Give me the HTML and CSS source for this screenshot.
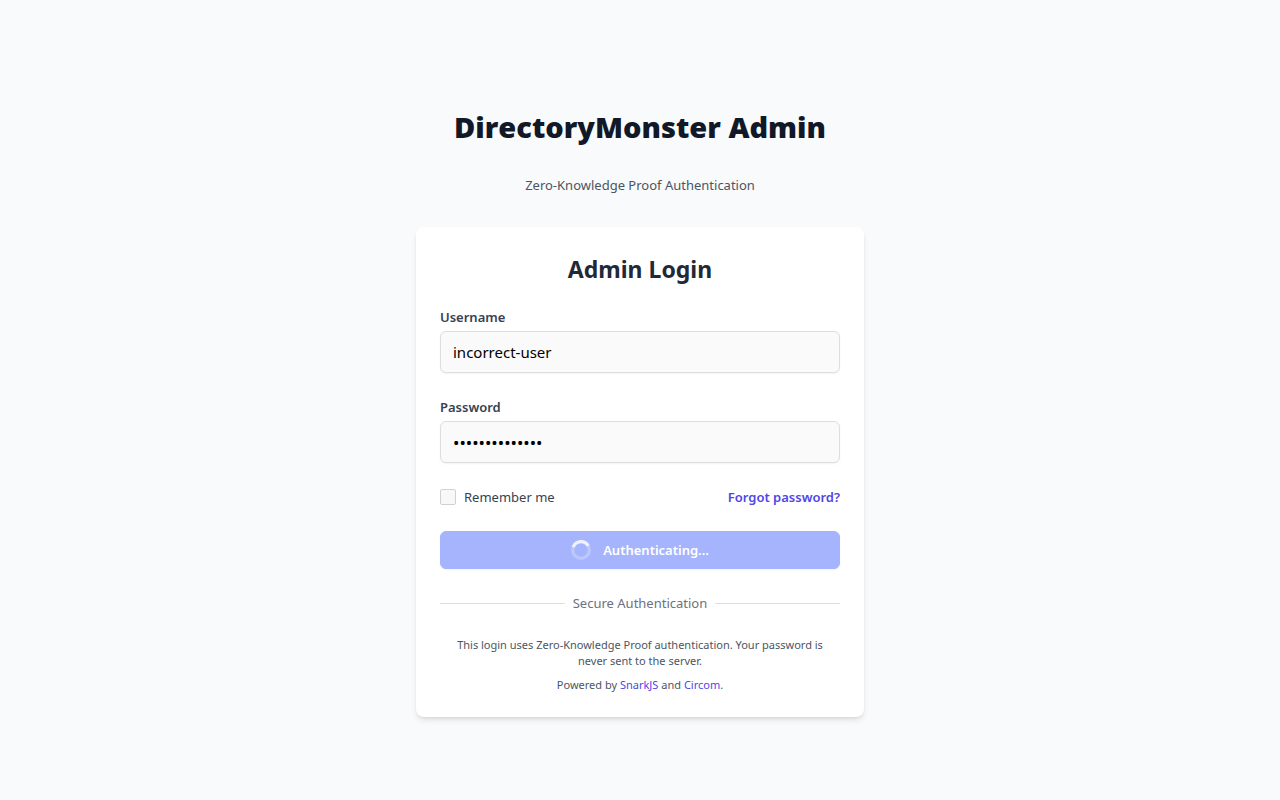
FILE: index.html
```html
<!DOCTYPE html>
<html lang="en">
<head>
<meta charset="utf-8">
<meta name="viewport" content="width=device-width, initial-scale=1">
<title>DirectoryMonster Admin</title>
<link rel="stylesheet" href="styles.css">
</head>
<body>
<main class="page">
  <header class="intro">
    <h1 class="brand">DirectoryMonster Admin</h1>
    <p class="tagline">Zero-Knowledge Proof Authentication</p>
  </header>
  <section class="card">
    <h2 class="card-title">Admin Login</h2>
    <form class="form">
      <div class="field">
        <label class="label" for="username">Username</label>
        <input class="input" id="username" type="text" value="incorrect-user" disabled>
      </div>
      <div class="field">
        <label class="label" for="password">Password</label>
        <input class="input password" id="password" type="password" value="wrong-password" disabled>
      </div>
      <div class="options">
        <div class="remember">
          <input class="checkbox" id="remember" type="checkbox" disabled>
          <label for="remember">Remember me</label>
        </div>
        <a class="forgot" href="#">Forgot password?</a>
      </div>
      <button class="submit" type="submit" disabled>
        <svg class="spinner" viewBox="0 0 24 24" fill="none" aria-hidden="true">
          <circle cx="12" cy="12" r="10" stroke="currentColor" stroke-width="4" opacity=".25"/>
          <path d="M2.6 8.6A10 10 0 0 1 20.7 7" stroke="currentColor" stroke-width="4" opacity=".75"/>
        </svg>
        <span>Authenticating...</span>
      </button>
    </form>
    <div class="divider"><span>Secure Authentication</span></div>
    <div class="notes">
      <p>This login uses Zero-Knowledge Proof authentication. Your password is never sent to the server.</p>
      <p>Powered by <a class="link" href="#">SnarkJS</a> and <a class="link" href="#">Circom</a>.</p>
    </div>
  </section>
</main>
</body>
</html>
```
FILE: styles.css
```css
*, *::before, *::after { box-sizing: border-box; }
h1, h2, p { margin: 0; }
body {
  margin: 0;
  background: #f9fafb;
  color: #374151;
  font: 13px/20px "Segoe UI", "Noto Sans", sans-serif;
}
a { text-decoration: none; }
input, button { font: inherit; }
.page {
  min-height: 100vh;
  display: flex;
  flex-direction: column;
  align-items: center;
  justify-content: center;
  padding: 72px 16px 48px;
}
.intro { text-align: center; }
.brand {
  color: #111827;
  font-family: "Segoe UI", "Open Sans", sans-serif;
  font-size: 29px;
  line-height: 40px;
  font-weight: 800;
}
.tagline { margin-top: 28px; color: #4b5563; }
.card {
  width: 100%;
  max-width: 448px;
  margin-top: 32px;
  padding: 24px;
  background: #fff;
  border-radius: 8px;
  box-shadow: 0 4px 6px -1px rgb(0 0 0 / .1), 0 2px 4px -2px rgb(0 0 0 / .1);
}
.card-title {
  margin-bottom: 20px;
  color: #1f2937;
  font-size: 23px;
  line-height: 36px;
  font-weight: 700;
  text-align: center;
}
.form { display: flex; flex-direction: column; gap: 24px; }
.field { display: flex; flex-direction: column; gap: 4px; }
.label { font-weight: 600; }
.input {
  width: 100%;
  height: 42px;
  padding: 8px 12px;
  border: 1px solid #dcdee2;
  border-radius: 6px;
  background: #fafafa;
  color: #000;
  font-size: 15px;
  line-height: 24px;
  box-shadow: 0 1px 2px rgb(0 0 0 / .05);
}
.password { font-size: 17px; }
.options { display: flex; align-items: center; justify-content: space-between; }
.remember { display: flex; align-items: center; gap: 8px; }
.checkbox {
  appearance: none;
  width: 16px;
  height: 16px;
  margin: 0;
  border: 1px solid #d1d1d1;
  border-radius: 2px;
  background: #f8f8f8;
}
.forgot { color: #4f46e5; font-weight: 600; }
.submit {
  display: flex;
  align-items: center;
  justify-content: center;
  gap: 12px;
  width: 100%;
  padding: 8px 16px;
  border: 1px solid #a5b4fc;
  border-radius: 6px;
  background: #a5b4fc;
  color: #fff;
  font-weight: 600;
  box-shadow: 0 1px 2px rgb(0 0 0 / .05);
}
.spinner { width: 20px; height: 20px; overflow: hidden; }
.divider {
  display: flex;
  align-items: center;
  gap: 8px;
  margin-top: 24px;
  color: #6b7280;
}
.divider::before, .divider::after { content: ""; flex: 1; height: 1px; background: #dcdee2; }
.notes {
  display: flex;
  flex-direction: column;
  gap: 8px;
  margin-top: 24px;
  padding: 0 8px;
  color: #4b5563;
  font-size: 11px;
  line-height: 16px;
  text-align: center;
}
.link { color: #4f46e5; }
```
